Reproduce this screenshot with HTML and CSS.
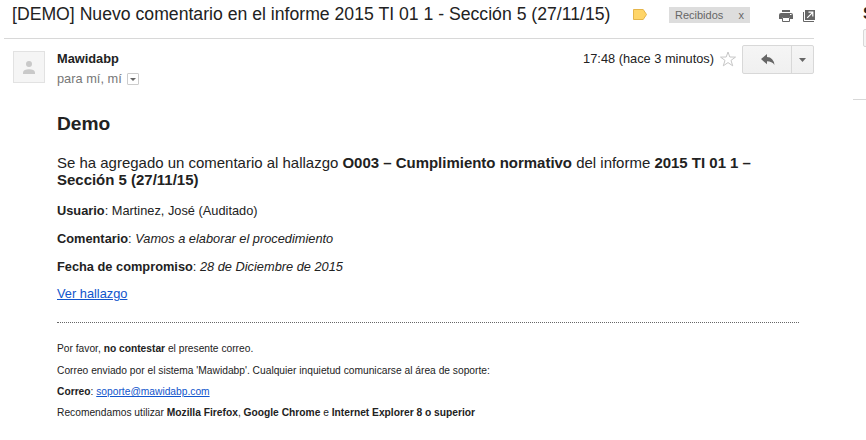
FILE: index.html
```html
<!DOCTYPE html>
<html lang="es">
<head>
<meta charset="utf-8">
<title>Nuevo comentario</title>
<link rel="stylesheet" href="styles.css">
</head>
<body>
<div class="page">
  <main class="thread">
    <header class="subject-bar">
      <h1 class="subject">[DEMO] Nuevo comentario en el informe 2015 TI 01 1 - Sección 5 (27/11/15)</h1>
      <svg class="tag" width="15" height="12" viewBox="0 0 15 12"><path d="M.5.5h9.7l3.3 5-3.3 5H.5z" fill="#ffd568" stroke="#e5b54a"/></svg>
      <div class="label"><span>Recibidos</span><span>x</span></div>
      <svg class="print" width="14" height="12" viewBox="0 0 14 12"><path d="M3 0h8v2H3zM2 3h10q2 0 2 2v4h-3V7H3v2H0V5q0-2 2-2z" fill="#666"/><path d="M3.500 7.500h7v4h-7z" fill="#fff" stroke="#666"/><path d="M11 4.500h1.500" stroke="#fff"/></svg>
      <svg class="popout" width="12" height="12" viewBox="0 0 12 12"><path d="M2 0h10v10H2z" fill="#666"/><path d="M.5 2v9.500H11" fill="none" stroke="#666"/><path d="M4.200 7.800l5-5M5.500 2.200h4.300v4.300" fill="none" stroke="#fff" stroke-width="1.200"/></svg>
    </header>
    <section class="sender-row">
      <div class="avatar"><svg width="12" height="13" viewBox="0 0 12 13"><circle cx="6" cy="3" r="3" fill="#c9c9c9"/><path d="M0 13v-1.700Q.5 8.300 6 8.200q5.500.1 6 3.100V13z" fill="#c9c9c9"/></svg></div>
      <div class="sender">
        <div class="name">Mawidabp</div>
        <div class="to"><span>para mí, mí</span><span class="details"><svg width="6" height="3" viewBox="0 0 6 3"><path d="M0 0h6L3 3z" fill="#666"/></svg></span></div>
      </div>
      <div class="time">17:48 (hace 3 minutos)</div>
      <svg class="star" width="16" height="16" viewBox="0 0 16 16"><path d="M8 1l1.800 5 5.700.1-4.500 3.300 1.700 5.400L8 11.600l-4.700 3.200 1.700-5.400L.5 6.100l5.700-.1z" fill="#fff" stroke="#c6c6c6"/></svg>
      <div class="actions">
        <div class="reply"><svg width="14" height="12" viewBox="0 0 14 12"><path d="M6 0v3q6.500.3 7.500 8Q11 7.300 6 7.300v3L0 5.100z" fill="#666"/></svg></div>
        <div class="more"><svg width="7" height="4" viewBox="0 0 7 4"><path d="M0 0h7L3.500 4z" fill="#666"/></svg></div>
      </div>
    </section>
    <article class="message">
      <h2>Demo</h2>
      <h3>Se ha agregado un comentario al hallazgo <b>O003 – Cumplimiento normativo</b> del informe <b>2015 TI 01 1 – Sección 5 (27/11/15)</b></h3>
      <p><b>Usuario</b>: Martinez, José (Auditado)</p>
      <p><b>Comentario</b>: <i>Vamos a elaborar el procedimiento</i></p>
      <p><b>Fecha de compromiso</b>: <i>28 de Diciembre de 2015</i></p>
      <p class="link"><a href="#">Ver hallazgo</a></p>
      <footer>
        <p class="notice">Por favor, <b>no contestar</b> el presente correo.</p>
        <p>Correo enviado por el sistema 'Mawidabp'. Cualquier inquietud comunicarse al área de soporte:</p>
        <p><b>Correo</b>: <a href="#">soporte@mawidabp.com</a></p>
        <p>Recomendamos utilizar <b>Mozilla Firefox</b>, <b>Google Chrome</b> e <b>Internet Explorer 8 o superior</b></p>
      </footer>
    </article>
  </main>
  <aside class="people">
    <div class="person">S</div>
    <div class="person-action"></div>
  </aside>
</div>
</body>
</html>
```
FILE: styles.css
```css
* { box-sizing: border-box; }
body {
  margin: 0;
  background: #fff;
  color: #222;
  font-family: "Liberation Sans", Arial, sans-serif;
  font-size: 12.8px;
}
svg { display: block; flex: none; }
h1, h2, h3, p { margin: 0; font-weight: normal; }
.page { display: flex; justify-content: space-between; width: 866px; height: 440px; overflow: hidden; }
.thread { width: 810px; margin-left: 4px; }
.subject-bar { display: flex; height: 39px; padding-left: 8px; border-bottom: 1px solid #d8d8d8; }
.subject { flex: none; width: 621px; font-size: 17.65px; line-height: 20px; margin-top: 4px; white-space: nowrap; }
.tag { margin-top: 9px; }
.label {
  display: flex; flex: none; justify-content: space-between;
  width: 81px; height: 16px; margin: 7px 0 0 21px; padding: 0 6px;
  background: #ddd; color: #666; font-size: 11px; line-height: 16px;
}
.print { margin: 10px 0 0 29px; }
.popout { margin: 10px 0 0 10px; }
.sender-row { display: flex; height: 63px; padding-left: 9px; }
.avatar {
  display: flex; justify-content: center;
  width: 32px; height: 32px; margin-top: 12px; padding-top: 9px;
  background: #f5f5f5; border: 1px solid #e2e2e2;
}
.sender { margin: 12px 0 0 12px; flex: 1; }
.name { font-weight: bold; line-height: 16px; }
.to { display: flex; color: #777; line-height: 16px; margin-top: 4px; }
.details {
  display: flex; align-items: center; justify-content: center;
  width: 12px; height: 12px; margin: 2px 0 0 5px;
  border: 1px solid #ccc; border-radius: 1px;
}
.time { margin-top: 12px; line-height: 16px; }
.star { margin: 12px 0 0 6px; }
.actions {
  display: flex; width: 72px; height: 29px; margin: 6px 0 0 6px;
  background: linear-gradient(#f5f5f5, #f0f0f0); border: 1px solid #d8d8d8; border-radius: 2px;
}
.reply, .more { display: flex; align-items: center; justify-content: center; }
.reply { width: 49px; padding-left: 2px; border-right: 1px solid #d8d8d8; }
.more { flex: 1; }
.message { width: 742px; margin: 11px 0 0 53px; line-height: 15px; }
.message h2 { font-size: 19.2px; font-weight: bold; line-height: 22px; }
.message h3 { font-size: 14.98px; line-height: 17px; margin: 19px 0 15px; }
.message p + p { margin-top: 13px; }
.message p.link { margin-top: 12px; }
a { color: #15c; }
.message footer { margin-top: 21px; padding-top: 20px; border-top: 1px dotted #666; font-size: 10.24px; line-height: 12px; }
.message footer p + p { margin-top: 9px; }
.message footer .notice + p { margin-top: 10px; }
.people { width: 13px; height: 100px; border-bottom: 1px solid #d8d8d8; overflow: hidden; padding-left: 10px; }
.person { font-size: 16px; font-weight: bold; line-height: 18px; margin-top: 5px; }
.person-action { width: 40px; height: 18px; margin-top: 6px; background: #f5f5f5; border: 1px solid #d8d8d8; border-radius: 2px; }
```
